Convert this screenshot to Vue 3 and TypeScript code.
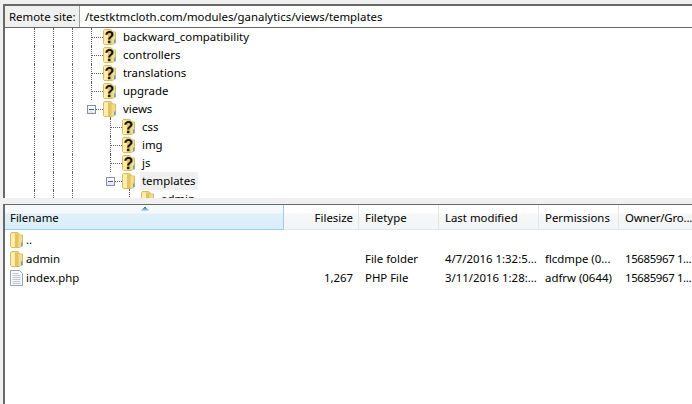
<script setup lang="ts">
interface TreeRow {
  name: string
  guides: boolean[]
  joint: 'tee' | 'end' | 'expander'
  kind: 'unknown' | 'folder'
  below?: boolean
  selected?: boolean
}
const treeRows: TreeRow[] = [
  { name: 'backward_compatibility', guides: [true, true, true], joint: 'tee', kind: 'unknown' },
  { name: 'controllers', guides: [true, true, true], joint: 'tee', kind: 'unknown' },
  { name: 'translations', guides: [true, true, true], joint: 'tee', kind: 'unknown' },
  { name: 'upgrade', guides: [true, true, true], joint: 'tee', kind: 'unknown' },
  { name: 'views', guides: [true, true, true], joint: 'expander', kind: 'folder', below: true },
  { name: 'css', guides: [true, true, true, false], joint: 'tee', kind: 'unknown' },
  { name: 'img', guides: [true, true, true, false], joint: 'tee', kind: 'unknown' },
  { name: 'js', guides: [true, true, true, false], joint: 'tee', kind: 'unknown' },
  { name: 'templates', guides: [true, true, true, false], joint: 'expander', kind: 'folder', below: true, selected: true },
  { name: 'admin', guides: [true, true, true, false, false], joint: 'end', kind: 'folder' }
]
interface FileRow {
  name: string
  icon: 'folder' | 'doc'
  size: string
  type: string
  modified: string
  perms: string
  owner: string
}
const fileRows: FileRow[] = [
  { name: '..', icon: 'folder', size: '', type: '', modified: '', perms: '', owner: '' },
  { name: 'admin', icon: 'folder', size: '', type: 'File folder', modified: '4/7/2016 1:32:5...', perms: 'flcdmpe (0...', owner: '15685967 1...' },
  { name: 'index.php', icon: 'doc', size: '1,267', type: 'PHP File', modified: '3/11/2016 1:28:...', perms: 'adfrw (0644)', owner: '15685967 1...' }
]
</script>

<template>
  <div class="window">
    <div class="site-bar">
      <label class="site-label">Remote site:</label>
      <div class="site-input">/testktmcloth.com/modules/ganalytics/views/templates</div>
    </div>
    <div class="tree">
      <div v-for="row in treeRows" :key="row.name" class="tree-row">
        <span v-for="(g, i) in row.guides" :key="i" class="cell" :class="{ guide: g }"></span>
        <span class="cell joint" :class="row.joint">
          <span v-if="row.joint === 'expander'" class="minus"></span>
        </span>
        <span class="tree-icon" :class="{ below: row.below }">
          <svg width="13" height="16" viewBox="0 0 13 16">
            <path d="M.5 1.500 1.500.5h6l1.500 1v1.500h3.500V14L9 15.500H1.500l-1-1z" fill="#f2dc8e" stroke="#d9bb64" />
            <path d="M1 1.500h4V15H1z" fill="#fbeeb0" />
            <path d="M5 1.500h3.500V15H5z" fill="#e6c25f" />
            <path d="M9 3.500h3V14l-3 1z" fill="#f2dc8e" />
            <path d="M11 10.500h1.500V14H11z" fill="#58a6dc" />
            <text v-if="row.kind === 'unknown'" x="6.500" y="13.500" text-anchor="middle" class="q">?</text>
          </svg>
        </span>
        <span class="tree-name" :class="{ selected: row.selected }">{{ row.name }}</span>
      </div>
    </div>
    <div class="splitter"></div>
    <div class="list">
      <div class="list-head">
        <div class="th name sorted">
          <svg class="sort" width="8" height="4" viewBox="0 0 8 4">
            <path d="M3 0h2v1H3z" fill="#4f7390" />
            <path d="M2 1h4v1H2z" fill="#6f97b5" />
            <path d="M1 2h6v1H1z" fill="#8fbad6" />
            <path d="M0 3h8v1H0z" fill="#b4d8ee" />
          </svg>
          Filename
        </div>
        <div class="th size">Filesize</div>
        <div class="th type">Filetype</div>
        <div class="th modified">Last modified</div>
        <div class="th perms">Permissions</div>
        <div class="th owner">Owner/Gro...</div>
      </div>
      <div v-for="f in fileRows" :key="f.name" class="list-row">
        <div class="td name">
          <svg v-if="f.icon === 'folder'" width="13" height="16" viewBox="0 0 13 16" class="file-icon">
            <path d="M.5 1.500 1.500.5h6l1.500 1v1.500h3.500V14L9 15.500H1.500l-1-1z" fill="#f2dc8e" stroke="#d9bb64" />
            <path d="M1 1.500h4V15H1z" fill="#fbeeb0" />
            <path d="M5 1.500h3.500V15H5z" fill="#e6c25f" />
            <path d="M9 3.500h3V14l-3 1z" fill="#f2dc8e" />
            <path d="M11 10.500h1.500V14H11z" fill="#58a6dc" />
          </svg>
          <svg v-else width="13" height="16" viewBox="0 0 13 16" class="file-icon">
            <path d="M.5.5h9l3 3v12H.5z" fill="#f8fafc" stroke="#9aa3ab" />
            <path d="M2.500 3.500h6M2.500 5.500h8M2.500 7.500h8M2.500 9.500h8M2.500 11.500h8M2.500 13.500h8" stroke="#bcc6d0" />
          </svg>
          <span>{{ f.name }}</span>
        </div>
        <div class="td size">{{ f.size }}</div>
        <div class="td type">{{ f.type }}</div>
        <div class="td modified">{{ f.modified }}</div>
        <div class="td perms">{{ f.perms }}</div>
        <div class="td owner">{{ f.owner }}</div>
      </div>
    </div>
  </div>
</template>

<style>
html, body { margin: 0; background: #f0f0f0; overflow: hidden; }
</style>

<style scoped>
.window {
  width: 692px;
  height: 404px;
  box-sizing: border-box;
  padding: 4px 0 0 3px;
  background: #f0f0f0;
  font-family: "Noto Sans", "Open Sans", sans-serif;
  font-size: 11.4px;
  color: #000;
  display: flex;
  flex-direction: column;
  overflow: hidden;
}
.site-bar {
  flex: none;
  height: 24px;
  box-sizing: border-box;
  border-top: 2px solid #696969;
  border-left: 2px solid #696969;
  border-bottom: 1px solid #696969;
  display: flex;
  background: #f0f0f0;
}
.site-label { width: 74px; padding-left: 4px; box-sizing: border-box; line-height: 21px; flex: none; }
.site-input {
  flex: 1;
  background: #fff;
  border-left: 1px solid #a0a0a0;
  padding-left: 5px;
  line-height: 21px;
}
.tree {
  flex: none;
  height: 170px;
  box-sizing: border-box;
  border-left: 2px solid #696969;
  background: #fff;
  padding-left: 20px;
  overflow: hidden;
}
.tree-row { height: 18px; display: flex; }
.cell { width: 19px; height: 18px; flex: none; position: relative; }
.guide::before, .tee::before, .end::before {
  content: "";
  position: absolute;
  left: 9px;
  top: 0;
  bottom: 0;
  border-left: 1px dotted #606060;
}
.end::before { bottom: 9px; }
.joint::after {
  content: "";
  position: absolute;
  left: 10px;
  right: -2px;
  top: 9px;
  border-top: 1px dotted #606060;
}
.minus {
  position: absolute;
  left: 5px;
  top: 5px;
  width: 9px;
  height: 9px;
  box-sizing: border-box;
  border: 1px solid #8c8f9c;
  background: linear-gradient(#fff, #e2e5ec);
  z-index: 1;
}
.minus::after {
  content: "";
  position: absolute;
  left: 1px;
  top: 3px;
  width: 5px;
  height: 1px;
  background: #3a60a8;
}
.tree-icon { width: 15px; height: 18px; flex: none; margin-left: 2px; padding-top: 1px; box-sizing: border-box; position: relative; }
.tree-icon svg { display: block; }
.below::after {
  content: "";
  position: absolute;
  left: 7px;
  top: 17px;
  bottom: 0;
  border-left: 1px dotted #606060;
}
.q { font-family: "Liberation Sans", sans-serif; font-weight: 700; font-size: 16px; fill: #111; }
.tree-name {
  margin-left: 3px;
  padding: 0 2px;
  line-height: 18px;
  height: 18px;
  white-space: nowrap;
}
.selected { background: #f0f0f0; }
.splitter { flex: none; height: 7px; background: #f0f0f0; border-bottom: 1px solid #696969; box-sizing: border-box; }
.list { flex: 1; background: #fff; border-left: 2px solid #696969; min-height: 0; }
.list-head {
  height: 25px;
  box-sizing: border-box;
  display: grid;
  grid-template-columns: 279px 75px 80px 100px 80px 1fr;
  background: linear-gradient(#fff 0, #fff 35%, #f6f7f7 36%, #f3f4f5 100%);
  border-bottom: 1px solid #e4e5e6;
}
.th { line-height: 25px; padding-left: 6px; border-right: 1px solid #e3e5e7; position: relative; white-space: nowrap; overflow: hidden; }
.th.name { padding-left: 5px; }
.th.size { text-align: right; padding-right: 5px; }
.th.owner { border-right: 0; letter-spacing: -0.15px; }
.sorted {
  background: linear-gradient(#f3f9fd 0, #f3f9fd 35%, #e1f0f8 36%, #d9edf8 100%);
  border-right: 1px solid #94d0ef;
  border-bottom: 1px solid #94d0ef;
  height: 25px;
  box-sizing: border-box;
}
.sort { position: absolute; left: 136px; top: 2px; }
.list-row {
  height: 19px;
  display: grid;
  grid-template-columns: 279px 75px 80px 100px 80px 1fr;
  line-height: 19px;
  white-space: nowrap;
}
.td { padding-left: 6px; overflow: hidden; }
.td.name { display: flex; align-items: center; padding-left: 5px; }
.td.size { text-align: right; padding-right: 6px; }
.td.owner { letter-spacing: -0.35px; }
.file-icon { flex: none; margin-right: 3px; display: block; }
</style>
